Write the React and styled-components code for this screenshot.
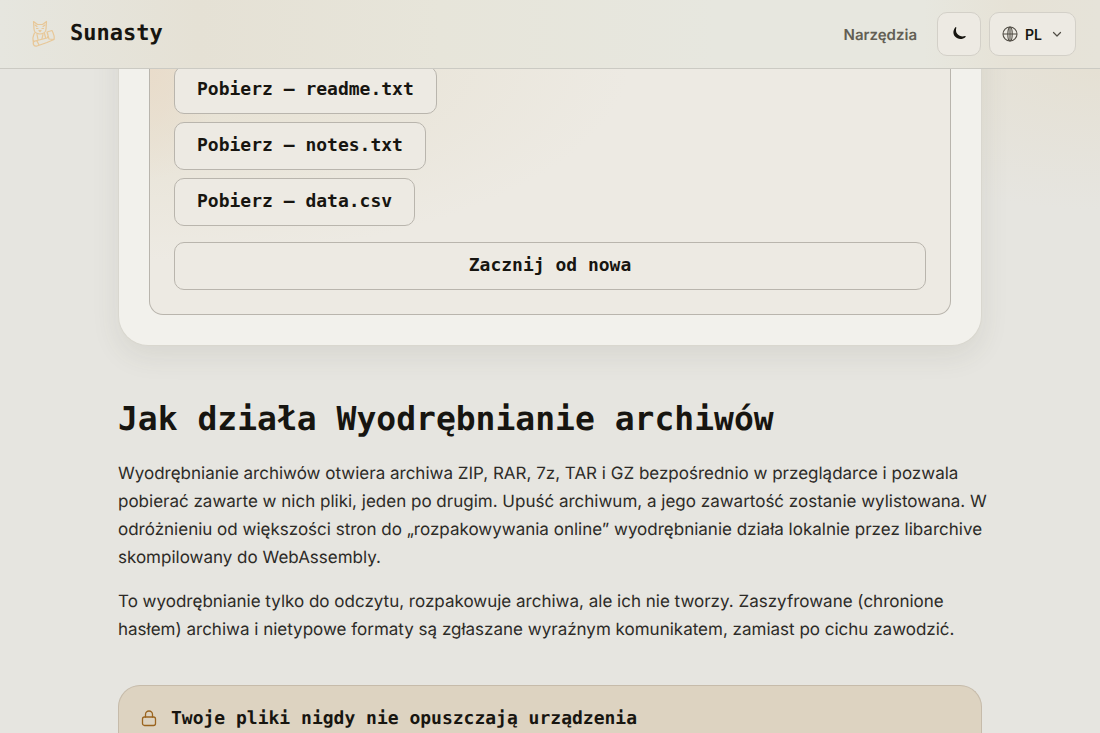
import React from "react";
import styled, { createGlobalStyle } from "styled-components";

const mono = '"DejaVu Sans Mono", monospace';
const sans = 'Inter, "Liberation Sans", sans-serif';

const GlobalStyle = createGlobalStyle`
  *, *::before, *::after { box-sizing: border-box; }
  body { margin: 0; background: #e6e5e0; color: #171510; font-family: ${sans}; text-rendering: geometricPrecision; }
  button, select { font: inherit; color: inherit; }
`;

const Page = styled.div`
  display: flex;
  flex-direction: column;
  min-height: 100vh;
  background:
    radial-gradient(ellipse 300px 150px at 100% 60px, #e5e0d3, #e6e5e000),
    #e6e5e0;
`;

const Header = styled.header`
  position: fixed;
  inset: 0 0 auto;
  z-index: 2;
  display: flex;
  align-items: center;
  justify-content: space-between;
  height: 69px;
  padding: 0 24px;
  border-bottom: 1px solid #cbcac3;
  background: linear-gradient(90deg, #e6e6df 0, #e5e1d5 18%, #e7e5da 40%, #e7e7df 65%, #e7e7df 84%, #e6e2d6 92%, #e6e3d9 100%);
`;

const Brand = styled.a`
  display: flex;
  align-items: center;
  gap: 10px;
  color: inherit;
  font: 700 22px/32px ${mono};
  text-decoration: none;
`;

const Actions = styled.nav`
  display: flex;
  align-items: center;
  gap: 8px;
`;

const NavLink = styled.a`
  margin-right: 12px;
  color: #625e54;
  font-size: 15px;
  font-weight: 600;
  text-decoration: none;
`;

const IconButton = styled.button`
  display: grid;
  place-items: center;
  width: 44px;
  height: 44px;
  padding: 0;
  border: 1px solid #d3d0c8;
  border-radius: 10px;
  background: #edeae3;
`;

const Language = styled.label`
  position: relative;
  display: block;
  svg { position: absolute; top: 14px; pointer-events: none; }
  svg:first-child { left: 13px; }
  svg:last-child { top: 17px; right: 14px; }
`;

const LanguageSelect = styled.select`
  appearance: none;
  display: block;
  width: 87px;
  height: 44px;
  padding: 0 28px 0 35px;
  border: 1px solid #d3d0c8;
  border-radius: 10px;
  background: #edeae3;
  font-size: 14px;
  font-weight: 600;
`;

const Main = styled.main`
  display: flex;
  flex: 1;
  flex-direction: column;
  width: 100%;
  max-width: 912px;
  margin: 0 auto;
  padding: 0 24px;
`;

const Card = styled.section`
  padding: 0 30px 30px;
  border: 1px solid #d9d7cf;
  border-top: 0;
  border-radius: 0 0 30px 30px;
  background: #f2f1ec;
  box-shadow: 0 10px 28px #4a483018;
`;

const Panel = styled.div`
  display: flex;
  flex-direction: column;
  align-items: flex-start;
  gap: 8px;
  padding: 66px 24px 24px;
  border: 1px solid #b9b5ad;
  border-top: 0;
  border-radius: 0 0 14px 14px;
  background:
    radial-gradient(ellipse 70px 110px at 0 70px, #e9dccb, #e9dccb00),
    radial-gradient(ellipse 480px 200px at 0 60px, #e6e0d0, #edeae300),
    #edeae3;
`;

const FileButton = styled.button`
  height: 48px;
  padding: 0 22px 2px;
  border: 1px solid #b9b5ad;
  border-radius: 10px;
  background: #edeae3;
  font: 700 18px/24px ${mono};
`;

const ResetButton = styled(FileButton)`
  width: 100%;
  margin-top: 8px;
`;

const Heading = styled.h1`
  margin: 53px 0 21px;
  font: 700 33px/40px ${mono};
`;

const Paragraph = styled.p`
  margin: 0 -8px 16px 0;
  color: #2d2b27;
  font-size: 17px;
  line-height: 28px;
`;

const Notice = styled.section`
  flex: 1;
  margin-top: 25px;
  padding: 21px 22px 0;
  border: 1px solid #c6bbaa;
  border-bottom: 0;
  border-radius: 22px 22px 0 0;
  background: #ddd3c1;
`;

const NoticeTitle = styled.h2`
  display: flex;
  align-items: center;
  gap: 14px;
  margin: 0;
  font: 700 18px/24px ${mono};
`;

const CatLogo = () => (
  <svg width="36" height="36" viewBox="0 0 36 36" fill="none" stroke="#e8c797" strokeWidth="1.200" strokeLinecap="round" strokeLinejoin="round" aria-hidden="true">
    <path d="M10 13 9.500 5.500 13.500 8.500h5L22.500 5.500 22 13c0 3-2.500 5-6 5s-6-2-6-5Z" />
    <path d="m11 9 2 1.500m8-1.500-2 1.500M12.500 12.500h1.500m4 0h1.500m-4.500 2 1 1 1-1M10.500 17c-1.500 3-2 6-1 8.500m11-8 1 4M13 18.500l1 5m5-5-1 4" />
    <path d="m23 16 5-1.500c1 2 3 6 2 9l-7 3-10 3.500c-4 1-5-4-2-5l12-3c2-2 1-4 0-6Zm0 0 2 7 5 .5M9 25l4 0 2 4" />
  </svg>
);

const MoonIcon = () => (
  <svg width="16" height="16" viewBox="0 0 16 16" fill="#171510" aria-hidden="true">
    <path d="M4.500 1.200C2 4 1.600 7.600 4 10.600c2.700 3 7.500 3.200 10.500.3.400-.5.100-1-.5-.8-3 .7-5.800.1-7.600-2C4.900 6.300 4.700 4 5.300 1.700c.1-.6-.4-.9-.8-.5Z" />
  </svg>
);

const GlobeIcon = () => (
  <svg width="16" height="16" viewBox="0 0 16 16" fill="none" stroke="#514d45" strokeWidth="1.100" aria-hidden="true">
    <circle cx="8" cy="8" r="7" />
    <ellipse cx="8" cy="8" rx="2.200" ry="7" />
    <path d="M1 8h14M8 1v14" />
  </svg>
);

const ChevronIcon = () => (
  <svg width="10" height="10" viewBox="0 0 10 10" fill="none" stroke="#514d45" strokeWidth="1.200" strokeLinecap="round" strokeLinejoin="round" aria-hidden="true">
    <path d="m1.500 3.500 3.500 3.500 3.500-3.500" />
  </svg>
);

const LockIcon = () => (
  <svg width="16" height="18" viewBox="0 0 16 18" fill="none" stroke="#9a641f" strokeWidth="1.300" strokeLinecap="round" strokeLinejoin="round" aria-hidden="true">
    <rect x="1.500" y="7" width="13" height="8.500" rx="2" />
    <path d="M4.500 7V4.500a3.500 3.500 0 0 1 7 0V7" />
  </svg>
);

const files = ["readme.txt", "notes.txt", "data.csv"];

export default function App() {
  return (
    <Page>
      <GlobalStyle />
      <Header>
        <Brand href="#"><CatLogo />Sunasty</Brand>
        <Actions>
          <NavLink href="#tools">Narzędzia</NavLink>
          <IconButton type="button" aria-label="Tryb ciemny"><MoonIcon /></IconButton>
          <Language>
            <GlobeIcon />
            <LanguageSelect aria-label="Język" defaultValue="pl">
              <option value="pl">PL</option>
            </LanguageSelect>
            <ChevronIcon />
          </Language>
        </Actions>
      </Header>
      <Main>
        <Card>
          <Panel>
            {files.map((name) => (
              <FileButton type="button" key={name}>Pobierz — {name}</FileButton>
            ))}
            <ResetButton type="button">Zacznij od nowa</ResetButton>
          </Panel>
        </Card>
        <Heading>Jak działa Wyodrębnianie archiwów</Heading>
        <Paragraph>
          Wyodrębnianie archiwów otwiera archiwa ZIP, RAR, 7z, TAR i GZ bezpośrednio w przeglądarce i pozwala<br />
          pobierać zawarte w nich pliki, jeden po drugim. Upuść archiwum, a jego zawartość zostanie wylistowana. W<br />
          odróżnieniu od większości stron do „rozpakowywania online” wyodrębnianie działa lokalnie przez libarchive<br />
          skompilowany do WebAssembly.
        </Paragraph>
        <Paragraph>
          To wyodrębnianie tylko do odczytu, rozpakowuje archiwa, ale ich nie tworzy. Zaszyfrowane (chronione<br />
          hasłem) archiwa i nietypowe formaty są zgłaszane wyraźnym komunikatem, zamiast po cichu zawodzić.
        </Paragraph>
        <Notice>
          <NoticeTitle><LockIcon />Twoje pliki nigdy nie opuszczają urządzenia</NoticeTitle>
        </Notice>
      </Main>
    </Page>
  );
}
